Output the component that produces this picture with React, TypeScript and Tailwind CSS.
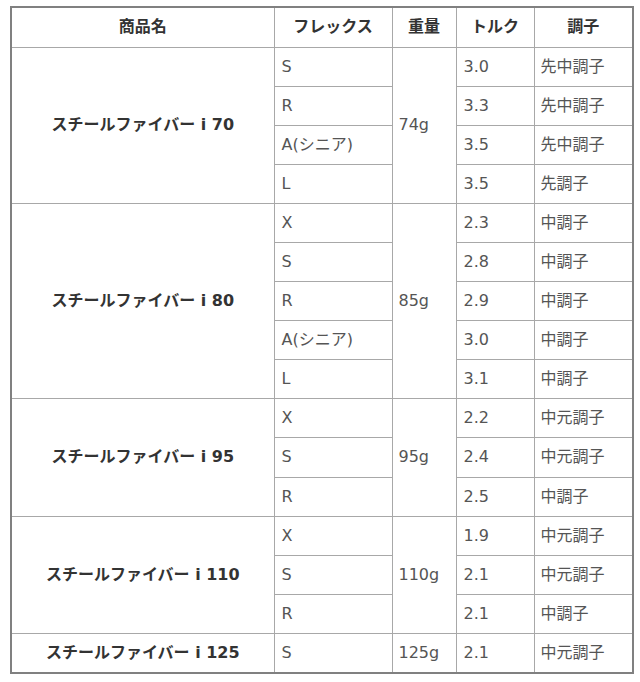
import React from 'react';

// Shaft spec table: 商品名 / フレックス / 重量 / トルク / 調子

type Row = { flex: string; torque: string; kick: string };

interface Group {
  name: string;
  weight: string;
  rows: Row[];
}

const GROUPS: Group[] = [
  {
    name: 'スチールファイバー i 70',
    weight: '74g',
    rows: [
      { flex: 'S', torque: '3.0', kick: '先中調子' },
      { flex: 'R', torque: '3.3', kick: '先中調子' },
      { flex: 'A(シニア)', torque: '3.5', kick: '先中調子' },
      { flex: 'L', torque: '3.5', kick: '先調子' },
    ],
  },
  {
    name: 'スチールファイバー i 80',
    weight: '85g',
    rows: [
      { flex: 'X', torque: '2.3', kick: '中調子' },
      { flex: 'S', torque: '2.8', kick: '中調子' },
      { flex: 'R', torque: '2.9', kick: '中調子' },
      { flex: 'A(シニア)', torque: '3.0', kick: '中調子' },
      { flex: 'L', torque: '3.1', kick: '中調子' },
    ],
  },
  {
    name: 'スチールファイバー i 95',
    weight: '95g',
    rows: [
      { flex: 'X', torque: '2.2', kick: '中元調子' },
      { flex: 'S', torque: '2.4', kick: '中元調子' },
      { flex: 'R', torque: '2.5', kick: '中調子' },
    ],
  },
  {
    name: 'スチールファイバー i 110',
    weight: '110g',
    rows: [
      { flex: 'X', torque: '1.9', kick: '中元調子' },
      { flex: 'S', torque: '2.1', kick: '中元調子' },
      { flex: 'R', torque: '2.1', kick: '中調子' },
    ],
  },
  {
    name: 'スチールファイバー i 125',
    weight: '125g',
    rows: [{ flex: 'S', torque: '2.1', kick: '中元調子' }],
  },
];

const HEADERS = ['商品名', 'フレックス', '重量', 'トルク', '調子'];

export default function App() {
  return (
    <div
      className="w-[640px] h-[682px] bg-white pt-[6px] pl-[10px]"
      style={{ fontFamily: '"DejaVu Sans", "Noto Sans CJK JP", sans-serif' }}
    >
      <table className="w-[622px] table-fixed border-collapse border-2 border-[#808080] text-[16px] text-[#555]">
        <colgroup>
          <col className="w-[263px]" />
          <col className="w-[118px]" />
          <col className="w-[64px]" />
          <col className="w-[78px]" />
          <col className="w-[99px]" />
        </colgroup>
        <thead>
          <tr className="h-[40px]">
            {HEADERS.map(h => (
              <th
                key={h}
                className="border border-[#a8a8a8] text-center font-bold text-[#333] p-0"
              >
                {h}
              </th>
            ))}
          </tr>
        </thead>
        <tbody>
          {GROUPS.map(g =>
            g.rows.map((r, i) => (
              <tr key={g.name + i} className="h-[39.1px]">
                {i === 0 && (
                  <td
                    rowSpan={g.rows.length}
                    className="border border-[#a8a8a8] text-center font-bold text-[#333] p-0"
                  >
                    {g.name}
                  </td>
                )}
                <td className="border border-[#a8a8a8] pl-[7px] p-0">{r.flex}</td>
                {i === 0 && (
                  <td
                    rowSpan={g.rows.length}
                    className="border border-[#a8a8a8] pl-[6px] p-0"
                  >
                    {g.weight}
                  </td>
                )}
                <td className="border border-[#a8a8a8] pl-[7px] p-0">{r.torque}</td>
                <td className="border border-[#a8a8a8] pl-[6px] p-0">{r.kick}</td>
              </tr>
            ))
          )}
        </tbody>
      </table>
    </div>
  );
}
